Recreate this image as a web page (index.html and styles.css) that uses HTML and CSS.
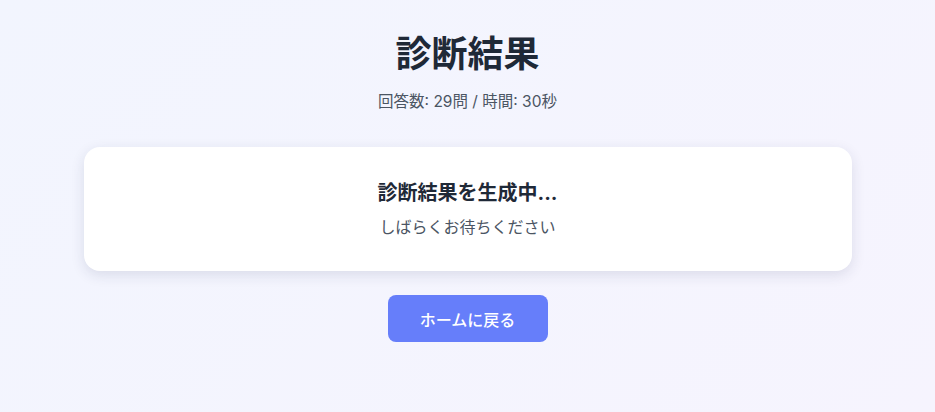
FILE: index.html
```html
<!DOCTYPE html>
<html lang="ja">
<head>
<meta charset="utf-8">
<title>診断結果</title>
<link rel="stylesheet" href="styles.css">
</head>
<body>
<main class="page">
  <h1 class="title">診断結果</h1>
  <p class="meta">回答数: 29問 / 時間: 30秒</p>
  <section class="card">
    <h2 class="card-title">診断結果を生成中...</h2>
    <p class="card-text">しばらくお待ちください</p>
  </section>
  <button class="home-btn" type="button">ホームに戻る</button>
</main>
</body>
</html>
```
FILE: styles.css
```css
* { box-sizing: border-box; }
html, body { margin: 0; padding: 0; }
body {
  min-height: 100vh;
  background: linear-gradient(135deg, #f2f5fe 0%, #f6f4fe 100%);
  font-family: Inter, "Noto Sans CJK JP", sans-serif;
  color: #1f2937;
}
.page {
  max-width: 800px;
  margin: 0 auto;
  padding: 32px 16px;
  display: flex;
  flex-direction: column;
  align-items: center;
}
.title {
  margin: 0;
  font-size: 36px;
  line-height: 44px;
  font-weight: 700;
  color: #1f2937;
}
.meta {
  margin: 15px 0 0;
  font-size: 15.5px;
  line-height: 22px;
  color: #4b5563;
}
.card {
  width: 100%;
  max-width: 768px;
  margin-top: 34px;
  background: #fff;
  border-radius: 16px;
  box-shadow: 0 4px 14px rgba(30, 41, 80, 0.12);
  padding: 32px 24px;
  text-align: center;
}
.card-title {
  margin: 0;
  font-size: 20px;
  line-height: 28px;
  font-weight: 700;
  color: #1f2937;
}
.card-text {
  margin: 8px 0 0;
  font-size: 16px;
  line-height: 24px;
  color: #4b5563;
}
.home-btn {
  margin-top: 24px;
  width: 160px;
  height: 47px;
  border: none;
  border-radius: 8px;
  background: #667efa;
  color: #fff;
  font-family: inherit;
  font-size: 16px;
  font-weight: 500;
  cursor: pointer;
}
```
